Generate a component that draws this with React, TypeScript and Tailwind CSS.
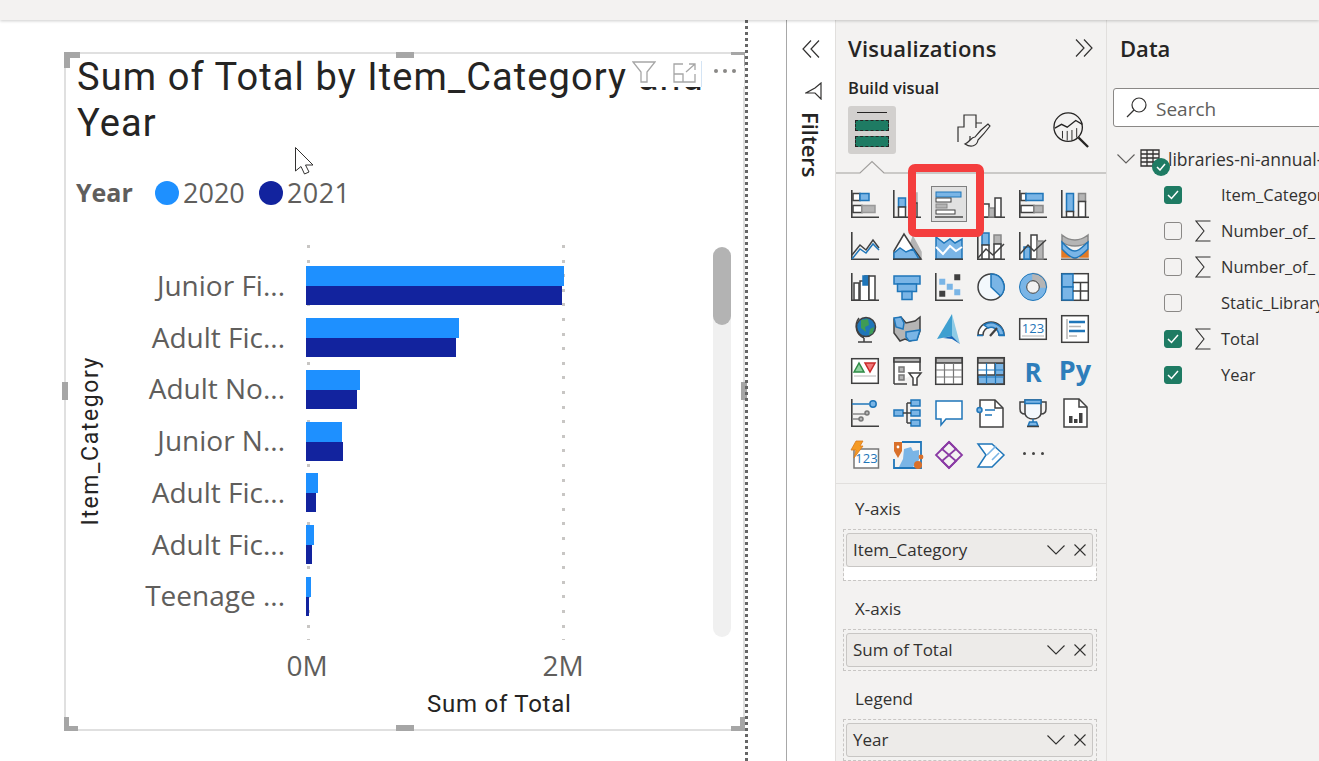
import type { ReactNode } from 'react';

const D = '#404040';
const B = '#1f76b9';
const L = '#7ab5e6';
const G = '#b5b5b5';

const categories = [
  { label: 'Junior Fi...', a: 258, b: 256 },
  { label: 'Adult Fic...', a: 153, b: 150 },
  { label: 'Adult No...', a: 54, b: 51 },
  { label: 'Junior N...', a: 36, b: 37 },
  { label: 'Adult Fic...', a: 12, b: 10 },
  { label: 'Adult Fic...', a: 8, b: 6 },
  { label: 'Teenage ...', a: 5, b: 3 },
];

const fields = [
  { label: 'Item_Category', checked: true, sigma: false },
  { label: 'Number_of_', checked: false, sigma: true },
  { label: 'Number_of_', checked: false, sigma: true },
  { label: 'Static_Library', checked: false, sigma: false },
  { label: 'Total', checked: true, sigma: true },
  { label: 'Year', checked: true, sigma: false },
];

function Ic({ children }: { children: ReactNode }) {
  return (
    <svg width="28" height="28" viewBox="0 0 28 28" fill="none" stroke={D} strokeWidth="1.5" className="overflow-visible">
      {children}
    </svg>
  );
}

const Axis = () => <path d="M.8 0V27.2H28" stroke={D} strokeWidth="1.6" />;
const R = ({ x, y, w, h, f = '#fff', s = D }: { x: number; y: number; w: number; h: number; f?: string; s?: string }) => (
  <rect x={x} y={y} width={w} height={h} fill={f} stroke={s} />
);

const icons: ReactNode[] = [
  // row 1
  <Ic><Axis /><R x={2} y={3.5} w={7} h={7} /><R x={9} y={3.5} w={9} h={7} f={L} s={B} /><R x={2} y={15.5} w={9} h={7} /><R x={11} y={15.5} w={13} h={7} f={G} s="#999" /></Ic>,
  <Ic><Axis /><R x={5.5} y={8} w={7} h={9} f={L} s={B} /><R x={5.5} y={17} w={7} h={10} /><R x={17} y={3} w={7} h={10} f={G} s={G} /><R x={17} y={13} w={7} h={14} /></Ic>,
  <div className="w-9 h-9 bg-[#e1e1e1] border border-[#7f7f7f] flex items-center justify-center">
    <svg width="28" height="28" viewBox="0 0 28 28" fill="none" stroke={D} strokeWidth="1">
      <R x={1} y={2} w={25} h={5} f={L} s={B} />
      <R x={1} y={8} w={15} h={4} />
      <R x={1} y={14} w={11} h={4} f={G} s="#888" />
      <R x={1} y={20} w={19} h={4} />
      <path d="M0 27H28" strokeWidth="1.4" />
    </svg>
  </div>,
  <Ic><Axis /><R x={1.5} y={3} w={4} h={24} f={L} s={B} /><R x={6} y={14} w={6} h={13} /><R x={12} y={18} w={5.5} h={9} f={G} s="#888" /><R x={18} y={8} w={6} h={19} /></Ic>,
  <Ic><Axis /><R x={2} y={3.5} w={5} h={7} /><R x={7} y={3.5} w={17} h={7} f={L} s={B} /><R x={2} y={15.5} w={13} h={7} /><R x={15} y={15.5} w={9} h={7} f={G} s="#888" /></Ic>,
  <Ic><Axis /><R x={5.5} y={3.5} w={7} h={18} f={L} s={B} /><R x={5.5} y={21.5} w={7} h={5.5} /><R x={17.5} y={3.5} w={7} h={8} f={G} s="#888" /><R x={17.5} y={11.5} w={7} h={15.5} /></Ic>,
  // row 2
  <Ic><Axis /><path d="M1 23L9 13L15 18L22 8L28 16" /><path d="M1 27L9 17L15 21L22 12L28 18" stroke={B} /></Ic>,
  <Ic><path d="M20 5L28 20V27H12Z" fill={G} stroke={G} /><path d="M1 19L11 2L20 16L28 27H1Z" fill="#fff" /><path d="M1 27V21L7 16L13 20L20 17L26 27Z" fill={L} stroke={B} /><path d="M0 27.2H28" strokeWidth="1.6" /></Ic>,
  <Ic><path d="M1 27V5L9 11L15 7L20 11L27 7V27Z" fill={L} stroke={B} /><path d="M1 15L8 22L15 14L21 19L27 15" stroke="#fff" strokeWidth="2" /><path d="M0 27.2H28" strokeWidth="1.6" /></Ic>,
  <Ic><Axis /><R x={5} y={1} w={7} h={12} f={L} s={B} /><R x={5} y={13} w={7} h={14} /><R x={17} y={3} w={7} h={9} f={G} s="#888" /><R x={17} y={12} w={7} h={15} /><path d="M1 26L9 17L16 23L27 12" /></Ic>,
  <Ic><Axis /><R x={5} y={15} w={6} h={12} f={L} s={B} /><R x={12} y={3} w={6} h={24} /><R x={18} y={9} w={6} h={18} f={G} s="#888" /><path d="M1 22L9 13L15 19L27 8" /></Ic>,
  <Ic><path d="M1 3C6 7 9 8 14 8C19 8 23 6 27 3V10C23 13 18 14 14 14C9 14 5 13 1 10Z" fill={G} stroke="#888" /><path d="M1 18H9V25H1ZM19 18H27V25H19Z" fill="#e27a25" stroke="#e27a25" /><path d="M1 10C6 15 9 19 14 19C19 19 23 13 27 10V17C23 21 18 26 14 26C9 26 5 21 1 17Z" fill={L} stroke={B} /><path d="M0 27.2H28" strokeWidth="1.2" /></Ic>,
  // row 3
  <Ic><Axis /><R x={3} y={10} w={5} h={17} /><path d="M9 27V8H14V3H18V27" fill="#fff" /><R x={12} y={3} w={5} h={9} f={B} s={B} /><R x={18} y={3} w={6} h={24} /></Ic>,
  <Ic><R x={1} y={3} w={26} h={8} f={L} s={B} /><R x={4.5} y={11} w={19} h={7.5} f={L} s={B} /><R x={9} y={18.5} w={10} h={8} f={L} s={B} /></Ic>,
  <Ic><Axis /><R x={20} y={2} w={4.5} h={4.5} f={D} s={D} /><R x={5} y={6.5} w={4.5} h={4.5} f={L} s={L} /><R x={12.5} y={11.5} w={4.5} h={4.5} f={L} s={L} /><R x={5} y={18.5} w={4.5} h={4.5} f={D} s={D} /><R x={20} y={17} w={4.5} h={4.5} f={L} s={L} /></Ic>,
  <Ic><circle cx="14" cy="14" r="13" fill="#f3f8fc" strokeWidth="1.5" /><path d="M14 14V1A13 13 0 0 1 23.5 23Z" fill={L} stroke={B} strokeWidth="1.5" /></Ic>,
  <Ic><circle cx="14" cy="14" r="10" stroke={L} strokeWidth="7" /><path d="M14 .5A13.5 13.5 0 0 1 27.5 14H20.5A6.5 6.5 0 0 0 14 7.5Z" fill={G} stroke={G} /><circle cx="14" cy="14" r="13.5" stroke={B} strokeWidth="1" /><circle cx="14" cy="14" r="6.3" stroke={D} strokeWidth="1" /></Ic>,
  <Ic><rect x=".7" y=".7" width="26.6" height="26.6" fill="#fff" strokeWidth="1.5" /><rect x="1" y="1" width="11" height="13" fill={L} stroke={B} /><rect x="1" y="14" width="11" height="13" fill={L} stroke={B} /><path d="M12 9.5H27M19.5 9.5V27M12 18H27" /></Ic>,
  // row 4
  <Ic><circle cx="15" cy="12" r="9.5" fill={B} stroke={D} /><path d="M10 5L17 4L18 10L14 12L15 17L10 13ZM19 14L23 12L22 18L18 20Z" fill="#3f9c55" stroke="none" /><path d="M8 3A13 13 0 0 0 13 23M13 23V27M7 27H21" /></Ic>,
  <Ic><path d="M1 4L8 2L13 8L22 6L27 2V16L24 24L17 26L12 24L7 26L1 18Z" fill={G} stroke={D} /><path d="M1 3L8 2L11 8L10 14L3 12ZM13 17L27 15L24 25L16 26L13 22Z" fill={L} stroke={B} /></Ic>,
  <svg width="24" height="30" viewBox="0 0 24 30"><path d="M15 0L0 25L15 22Z" fill="#3e9fd0" /><path d="M15 0L15 22L23 30Z" fill="#8ecbe6" /><path d="M6 24L15 22L23 30L15 25Z" fill="#1565b8" /></svg>,
  <Ic><path d="M1 20A13 13 0 0 1 27 20H22A8 8 0 0 0 6 20Z" fill="#fff" stroke={D} /><path d="M7 10A13 13 0 0 1 27 20H22A8 8 0 0 0 11 13Z" fill={L} stroke={B} /><path d="M13 21L20 13" strokeWidth="2.2" /><path d="M0 20.5H6M22 20.5H28" stroke={B} /></Ic>,
  <Ic><rect x=".7" y="3.7" width="26.6" height="20.6" fill="#fff" strokeWidth="1.5" /><text x="14" y="18" textAnchor="middle" fontSize="13" fontFamily="Open Sans, sans-serif" fill={B} stroke="none">123</text><path d="M3 21H25" stroke={G} strokeWidth="1" /></Ic>,
  <Ic><rect x=".7" y=".7" width="26.6" height="26.6" fill="#fff" strokeWidth="1.5" /><path d="M6 4V24" stroke={G} /><path d="M8 7H24M8 16H24" stroke={B} strokeWidth="2.6" /><path d="M8 11.5H20M8 21H16" stroke={G} strokeWidth="1.4" /></Ic>,
  // row 5
  <Ic><rect x=".7" y="1.7" width="26.6" height="24.6" fill="#fff" strokeWidth="1.5" /><path d="M3 15L8 6L13 15Z" fill="#8fd19e" stroke="#2e8b45" /><path d="M14 6H24L19 15Z" fill="#f27a7a" stroke="#c92a2a" /><path d="M3 19H25" stroke={G} strokeWidth="1" /></Ic>,
  <Ic><path d="M1 27V1H27V14M14 27H1" fill="#fff" /><rect x="1" y="1" width="26" height="4" fill={G} stroke={D} /><R x={6} y={10} w={5} h={5} f={G} s="#777" /><R x={6} y={18} w={5} h={5} f={G} s="#777" /><path d="M16 16H28L24 21V28H20V21Z" fill="#fff" /></Ic>,
  <Ic><rect x=".7" y=".7" width="26.6" height="26.6" fill="#fff" strokeWidth="1.5" /><rect x="1" y="1" width="26" height="5" fill={G} stroke={D} /><path d="M1 13H27M1 20H27M9.5 6V27M18.5 6V27" stroke="#777" strokeWidth="1.2" /></Ic>,
  <Ic><rect x=".7" y=".7" width="26.6" height="26.6" fill="#fff" strokeWidth="1.5" /><rect x="18" y="6" width="9" height="21" fill={L} /><rect x="1" y="18" width="26" height="9" fill={L} /><rect x="1" y="1" width="26" height="5" fill={G} stroke={D} /><path d="M1 13H27M1 20H27M9.5 6V27M18.5 6V27" stroke={B} strokeWidth="1.2" /></Ic>,
  <span className="text-[26px] leading-none font-bold text-[#2e7ebb] font-['Open_Sans',sans-serif] mt-[2px]">R</span>,
  <span className="text-[27px] leading-none font-bold text-[#2e7ebb] font-['Open_Sans',sans-serif] -mt-[4px]">Py</span>,
  // row 6
  <Ic><Axis /><path d="M1 5H18" stroke={B} /><path d="M1 15H14M1 20H10" stroke="#888" /><circle cx="22" cy="5" r="3.2" fill={L} stroke={B} /><circle cx="16" cy="14" r="2" fill={G} stroke="#777" /><circle cx="10" cy="20" r="2" fill={G} stroke="#777" /></Ic>,
  <Ic><R x={1} y={11} w={9} h={6} f={L} s={B} /><R x={18} y={1} w={9} h={6} f={L} s={B} /><R x={18} y={11} w={9} h={6} f={L} s={B} /><R x={18} y={21} w={9} h={6} f={L} s={B} /><path d="M10 14H18M14 4V24M14 4H18M14 24H18" /></Ic>,
  <Ic><path d="M1 2H27V20H11L6 26V20H1Z" fill="#fff" stroke={B} /></Ic>,
  <Ic><path d="M3 1H18L26 9V28H3Z" fill="#fff" /><path d="M18 1V9H26" /><circle cx="2.5" cy="11" r="2.5" fill={L} stroke={B} /><path d="M8 11H18M8 16H15" stroke={B} /></Ic>,
  <Ic><path d="M6 3H1V10C1 14 4 15 6 15M22 3H27V10C27 14 24 15 22 15" /><path d="M6 1H22V14C22 18 18 20 14 20C10 20 6 18 6 14Z" fill="#f3f8fc" /><rect x="6" y="1" width="16" height="3.5" fill={L} stroke={B} /><path d="M14 20V23M9 27L10.5 23H17.5L19 27Z" fill={L} stroke={B} /><path d="M8 27.5H20" /></Ic>,
  <Ic><path d="M3 0H18L26 8V28H3Z" fill="#fff" /><path d="M18 0V8H26" /><path d="M8 17H11.5V24H8ZM13 20H16.5V24H13ZM18 14H21.5V24H18Z" fill={D} stroke="none" /></Ic>,
  // row 7
  <Ic><rect x="3" y="8" width="24.5" height="19" fill="#fff" stroke="#777" /><text x="15.5" y="22" textAnchor="middle" fontSize="13" fontFamily="Open Sans, sans-serif" fill={B} stroke="none">123</text><path d="M5 0H12L9 5H12L3 17L5 9H0Z" fill="#f59a23" stroke="#d9791a" strokeWidth=".8" /></Ic>,
  <Ic><path d="M9 1H28V27H1V18" stroke={B} strokeWidth="1.8" /><path d="M11 8L18 6L20 10L26 9V19L20 26H6L10 18Z" fill={L} stroke="none" /><path d="M1 1H9V10L5 17L1 10Z" fill="#d9702a" stroke="none" /><circle cx="5" cy="6" r="1.4" fill="#fff" stroke="none" /><circle cx="25" cy="24" r="4" fill="#d9702a" stroke="none" /><circle cx="28" cy="16" r="2.4" fill="#d9702a" stroke="none" /></Ic>,
  <Ic><g stroke="#8a3aa4" strokeWidth="1.8"><path d="M14 1L27 14L14 27L1 14Z" /><path d="M14 1L21 8L14 14L7 8ZM14 14L21 20L14 27L7 20Z" /></g></Ic>,
  <Ic><path d="M1 3H15L27 14L15 26H1L9 14Z" fill="#fff" stroke={B} /><path d="M10 14L19 5M15 19L22 12" stroke={L} strokeWidth="1.6" /></Ic>,
  <div className="flex gap-[6px] -mt-[2px]">
    <span className="w-[3px] h-[3px] rounded-full bg-[#444]" />
    <span className="w-[3px] h-[3px] rounded-full bg-[#444]" />
    <span className="w-[3px] h-[3px] rounded-full bg-[#444]" />
  </div>,
];

function Chevron() {
  return (
    <svg width="18" height="10" viewBox="0 0 18 10" fill="none" stroke="#323130" strokeWidth="1.1" className="shrink-0">
      <path d="M.5 .5L9 9L17.5 .5" />
    </svg>
  );
}

function Well({ name, extra }: { name: string; extra?: boolean }) {
  return (
    <div className={`ml-[7px] w-[254px] border border-dashed border-[#c8c6c4] flex flex-col ${extra ? 'h-[52px]' : 'h-[42px]'}`}>
      <div className="ml-[2px] mr-[3px] mt-[3px] h-[34px] shrink-0 bg-[#edebe9] border border-[#c8c6c4] rounded-[3px] flex items-center pl-[6px] pr-[6px]">
        <span className="text-[17px] text-[#323130] flex-1">{name}</span>
        <Chevron />
        <svg width="12" height="12" viewBox="0 0 12 12" stroke="#323130" strokeWidth="1.1" className="ml-[9px] shrink-0">
          <path d="M.5 .5L11.5 11.5M11.5 .5L.5 11.5" />
        </svg>
      </div>
      {extra && <div className="flex-1 bg-white" />}
    </div>
  );
}

function Handle({ className }: { className: string }) {
  return <div className={`absolute bg-[#a6a6a6] ${className}`} />;
}

function Visual() {
  return (
    <div className="absolute left-[64px] top-[32px] w-[681px] h-[679px] border-2 border-[#e0e0e0] bg-white text-[#252423]">
      {/* resize handles */}
      <Handle className="-left-[2px] -top-[2px] w-[16px] h-[6px]" />
      <Handle className="-left-[2px] -top-[2px] w-[6px] h-[16px]" />
      <Handle className="left-[330px] -top-[2px] w-[18px] h-[6px]" />
      <Handle className="-right-[2px] -top-[2px] w-[14px] h-[5px]" />
      <Handle className="-right-[2px] -top-[2px] w-[2px] h-[14px]" />
      <Handle className="-left-[4px] top-[328px] w-[6px] h-[18px]" />
      <Handle className="-right-[4px] top-[328px] w-[6px] h-[18px]" />
      <Handle className="-left-[2px] -bottom-[2px] w-[14px] h-[5px]" />
      <Handle className="-left-[2px] -bottom-[2px] w-[5px] h-[14px]" />
      <Handle className="left-[330px] -bottom-[2px] w-[18px] h-[6px]" />
      <Handle className="-right-[2px] -bottom-[2px] w-[14px] h-[5px]" />
      <Handle className="-right-[2px] -bottom-[2px] w-[5px] h-[14px]" />

      {/* title */}
      <div className="pl-[11px] text-[38px] leading-[46px] whitespace-nowrap font-['Roboto',sans-serif] tracking-[1.1px]">
        <div>Sum of Total by Item_Category and</div>
        <div>Year</div>
      </div>

      {/* visual header */}
      <div className="absolute left-[562px] top-[1px] w-[75px] h-[32px] bg-white flex items-start pt-[6px] pl-[4px]">
        <svg width="24" height="22" viewBox="0 0 24 22" fill="none" stroke="#a6a6a6" strokeWidth="1.3" className="shrink-0">
          <path d="M1 1H23L15 11V21H9V11Z" />
        </svg>
      </div>
      <div className="absolute left-[600px] top-[1px] w-[78px] h-[32px] bg-white flex items-start pt-[8px] pl-[7px]">
        <svg width="24" height="20" viewBox="0 0 24 20" fill="none" stroke="#a6a6a6" strokeWidth="1.3" className="shrink-0">
          <path d="M10 1H1V19H22V11M1 11H10V19M13 9L22 1M16 1H22V7" />
        </svg>
        <div className="w-px h-[26px] bg-[#d4e4f4] ml-[4px] -mt-[2px]" />
        <div className="ml-[12px] mt-[6px] flex gap-[5px]">
          <span className="w-[4px] h-[4px] rounded-full bg-[#8a8886]" />
          <span className="w-[4px] h-[4px] rounded-full bg-[#8a8886]" />
          <span className="w-[4px] h-[4px] rounded-full bg-[#8a8886]" />
        </div>
      </div>

      {/* legend */}
      <div className="mt-[32px] h-[30px] pl-[10px] flex items-center text-[#605e5c] text-[27px] font-['Open_Sans',sans-serif]">
        <span className="font-bold text-[25px] w-[79px]">Year</span>
        <span className="w-[24px] h-[24px] rounded-full bg-[#1e90ff]" />
        <span className="ml-[4px] w-[76px]">2020</span>
        <span className="w-[24px] h-[24px] rounded-full bg-[#12239e]" />
        <span className="ml-[4px] tracking-[0.4px]">2021</span>
      </div>

      {/* chart */}
      <div className="relative mt-[32px] flex">
        <div className="absolute left-[241px] top-[5px] w-[3px] h-[395px] bg-[repeating-linear-gradient(to_bottom,#c8c6c4_0,#c8c6c4_3px,transparent_3px,transparent_14.6px)]" />
        <div className="absolute left-[496px] top-[5px] w-[3px] h-[395px] bg-[repeating-linear-gradient(to_bottom,#c8c6c4_0,#c8c6c4_3px,transparent_3px,transparent_14.6px)]" />
        <div className="absolute left-[647px] top-[7px] w-[18px] h-[390px] rounded-full bg-[#f0f0f0]">
          <div className="w-[18px] h-[78px] rounded-full bg-[#b3b3b3]" />
        </div>

        <div className="w-[50px] h-[402px] flex items-center justify-center">
          <span className="[writing-mode:vertical-rl] rotate-180 text-[23px] font-['Roboto',sans-serif] tracking-[1.6px] whitespace-nowrap">Item_Category</span>
        </div>
        <div className="relative">
          <div className="pt-[20px]">
            {categories.map((c, i) => (
              <div key={i} className="h-[51.75px] flex items-center">
                <div className="w-[169px] text-right text-[28px] leading-[36px] pb-[2px] text-[#605e5c] font-['Open_Sans',sans-serif] whitespace-nowrap">{c.label}</div>
                <div className="relative ml-[21px]">
                  <div className="h-[20px] bg-[#1e90ff]" style={{ width: c.a }} />
                  <div className="h-[19px] bg-[#12239e]" style={{ width: c.b }} />
                </div>
              </div>
            ))}
          </div>
          <div className="mt-[25px] pl-[161px] flex gap-[196px] text-[28px] h-[36px] leading-[36px] text-[#605e5c] font-['Open_Sans',sans-serif]">
            <span className="w-[60px] text-center">0M</span>
            <span className="w-[60px] text-center">2M</span>
          </div>
          <div className="mt-[6px] pl-[311px] text-[24px] leading-[30px] whitespace-nowrap font-['Roboto',sans-serif] tracking-[0.75px]">Sum of Total</div>
        </div>
      </div>
    </div>
  );
}

export default function App() {
  return (
    <div className="h-screen w-full overflow-hidden bg-white flex flex-col font-['Open_Sans',sans-serif] text-[#252423]">
      <div className="h-[20px] shrink-0 bg-[#f3f2f1] shadow-[0_1px_3px_rgba(0,0,0,0.2)] z-10" />
      <div className="flex-1 flex min-h-0">
        {/* report canvas */}
        <div className="relative w-[786px] shrink-0">
          <Visual />
          <div className="absolute left-[745px] top-0 bottom-0 w-[3px] bg-[repeating-linear-gradient(to_bottom,#666_0,#666_3px,transparent_3px,transparent_6px)]" />
          <svg className="absolute left-[295px] top-[127px]" width="20" height="28" viewBox="0 0 20 28">
            <path d="M.5 .5V24L6 19.5L9.5 27L14 25L10.5 18H18Z" fill="#fff" stroke="#323130" />
          </svg>
        </div>

        {/* filters pane */}
        <div className="w-[50px] shrink-0 border-l border-r border-l-[#a8a8a8] border-r-[#e1dfdd] bg-white flex flex-col items-center">
          <svg width="18" height="18" viewBox="0 0 18 18" fill="none" stroke="#323130" strokeWidth="1.2" className="mt-[20px]">
            <path d="M9 .5L1 9L9 17.5M17 .5L9 9L17 17.5" />
          </svg>
          <svg width="17" height="18" viewBox="0 0 17 18" fill="none" stroke="#323130" strokeWidth="1.2" className="mt-[24px] ml-[5px]">
            <path d="M16 1V17L10 11H1L10 6Z" />
          </svg>
          <span className="mt-[12px] [writing-mode:vertical-rl] text-[22px] font-semibold leading-none">Filters</span>
        </div>

        {/* visualizations pane */}
        <div className="relative w-[271px] shrink-0 bg-[#f3f2f1] border-r border-[#e1dfdd]">
          <div className="h-[30px] mt-[13px] pl-[12px] pr-[13px] flex items-center justify-between">
            <span className="text-[22px] font-semibold leading-[30px] tracking-[0.2px]">Visualizations</span>
            <svg width="18" height="18" viewBox="0 0 18 18" fill="none" stroke="#323130" strokeWidth="1.2">
              <path d="M1 .5L9 9L1 17.5M9 .5L17 9L9 17.5" />
            </svg>
          </div>
          <div className="mt-[15px] pl-[12px] h-[20px] text-[16.5px] font-semibold leading-[20px]">Build visual</div>
          <div className="mt-[8px] h-[48px] pl-[12px] flex">
            <div className="w-[48px] h-[48px] rounded-[3px] bg-[#d2d0ce] flex flex-col items-center pt-[6px]">
              <div className="w-[30px] h-px bg-[#252423]" />
              <div className="w-[34px] h-[11px] mt-[7px] bg-[#1e7b63] border border-dashed border-[#252423]" />
              <div className="w-[34px] h-[11px] mt-[5px] bg-[#1e7b63] border border-dashed border-[#252423]" />
            </div>
            <svg width="34" height="36" viewBox="0 0 34 36" fill="none" stroke="#323130" strokeWidth="1.2" className="ml-[61px] mt-[6px]">
              <path d="M1 30V15H7V3H19V11H25M13 30V24M19 11V16" />
              <path d="M31 12C27 15 21 21 18 25C14 25 13 30 8 32C14 36 20 34 21 28C25 24 30 18 33 14Z" fill="#f3f2f1" />
            </svg>
            <svg width="36" height="36" viewBox="0 0 38 38" fill="none" stroke="#252423" strokeWidth="1.4" className="ml-[62px] mt-[6px]">
              <circle cx="16" cy="16" r="15" />
              <path d="M2 17L9 13L15 16L24 9L31 13" />
              <path d="M10 20V28M15 20V30M20 19V30M25 17V27" strokeWidth="1" />
              <path d="M27 27L37 37" strokeWidth="2.4" />
            </svg>
          </div>
          <svg width="270" height="14" viewBox="0 0 270 14" fill="none" stroke="#a19f9d" strokeWidth="1.2" className="mt-[6px] block">
            <path d="M0 13H24L36 1.5L48 13H270" />
          </svg>

          <div className="mt-[9px] ml-[8px] grid grid-cols-[repeat(6,42px)] auto-rows-[41.8px]">
            {icons.map((icon, i) => (
              <div key={i} className="flex items-center justify-center">{icon}</div>
            ))}
          </div>

          <div className="mt-[7px] h-px bg-[#e1dfdd]" />

          <div className="mt-[15px] pl-[19px] h-[20px] text-[17px] leading-[20px] text-[#323130]">Y-axis</div>
          <div className="mt-[10px]"><Well name="Item_Category" extra /></div>
          <div className="mt-[18px] pl-[19px] h-[20px] text-[17px] leading-[20px] text-[#323130]">X-axis</div>
          <div className="mt-[10px]"><Well name="Sum of Total" /></div>
          <div className="mt-[18px] pl-[19px] h-[20px] text-[17px] leading-[20px] text-[#323130]">Legend</div>
          <div className="mt-[10px]"><Well name="Year" /></div>

          {/* selected visual highlight */}
          <div className="absolute left-[72px] top-[144px] w-[76px] h-[73px] border-[8px] border-[#f43e3e] rounded-[7px]" />
        </div>

        {/* data pane */}
        <div className="flex-1 min-w-0 overflow-hidden bg-[#f3f2f1]">
          <div className="mt-[13px] pl-[13px] h-[30px] text-[22px] font-semibold leading-[30px]">Data</div>
          <div className="mt-[25px] ml-[6px] w-[300px] h-[39px] bg-white border border-[#8a8886] rounded-[3px] flex items-center pl-[12px]">
            <svg width="21" height="21" viewBox="0 0 21 21" fill="none" stroke="#323130" strokeWidth="1.2" className="shrink-0">
              <circle cx="13" cy="8" r="7" />
              <path d="M8 13L1 20" />
            </svg>
            <span className="ml-[9px] mt-[3px] text-[19px] text-[#605e5c]">Search</span>
          </div>
          <div className="relative mt-[20px] h-[24px] flex items-center pl-[10px] whitespace-nowrap">
            <svg width="18" height="10" viewBox="0 0 18 10" fill="none" stroke="#605e5c" strokeWidth="1.1" className="shrink-0"><path d="M.5 .5L9 9L17.5 .5" /></svg>
            <svg width="20" height="18" viewBox="0 0 20 18" fill="none" stroke="#323130" strokeWidth="1.3" className="ml-[5px] -mt-[3px] shrink-0">
              <path d="M1 1H19V17H1ZM1 5H19M1 9H19M1 13H19M7 1V17M13 1V17" />
            </svg>
            <span className="ml-[8px] text-[17.5px] text-[#323130]">libraries-ni-annual-</span>
            <span className="absolute left-[45px] top-[11px] w-[18px] h-[18px] rounded-full bg-[#1e7b63] flex items-center justify-center">
              <svg width="10" height="8" viewBox="0 0 10 8" fill="none" stroke="#fff" strokeWidth="1.5"><path d="M1 4L4 7L9 1" /></svg>
            </span>
          </div>
          <div className="mt-[6px]">
            {fields.map((f, i) => (
              <div key={i} className="h-[36px] flex items-center whitespace-nowrap">
                <span className={`ml-[57px] w-[18px] h-[18px] shrink-0 rounded-[3px] flex items-center justify-center border ${f.checked ? 'bg-[#1e7b63] border-[#1e7b63]' : 'bg-[#f3f2f1] border-[#8a8886]'}`}>
                  {f.checked && (
                    <svg width="12" height="10" viewBox="0 0 12 10" fill="none" stroke="#fff" strokeWidth="1.5"><path d="M1 5L4.5 8.5L11 1" /></svg>
                  )}
                </span>
                <span className="w-[39px] shrink-0 pl-[13px]">
                  {f.sigma && (
                    <svg width="16" height="22" viewBox="0 0 16 22" fill="none" stroke="#323130" strokeWidth="1.1"><path d="M15.5 1H1L9 11L1 21H15.5" /></svg>
                  )}
                </span>
                <span className="text-[16.5px] text-[#323130]">{f.label}</span>
              </div>
            ))}
          </div>
        </div>
      </div>
    </div>
  );
}
